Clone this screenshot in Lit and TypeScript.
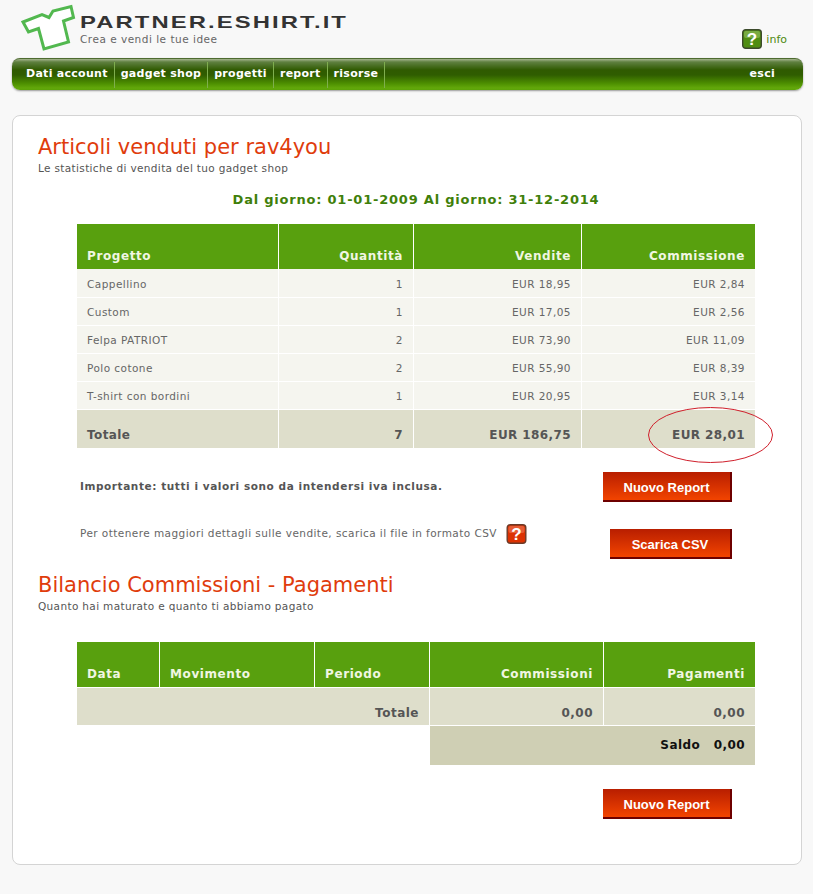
import { LitElement, html, css, svg } from "lit";
import { customElement } from "lit/decorators.js";

const FONT = css`"DejaVu Sans", Verdana, sans-serif`;

@customElement("app-root")
export class AppRoot extends LitElement {
  static styles = css`
    :host { display: block; width: 813px; height: 894px; overflow: hidden; background: #f8f8f8; font-family: ${FONT}; font-size: 11px; color: #555; position: relative; }
    * { box-sizing: border-box; }
    .top { height: 58px; display: flex; position: relative; }
    .shirt { width: 56px; height: 52px; margin: 3px 0 0 20px; flex: none; }
    .brand { margin: 13px 0 0 4px; }
    .brand b { display: block; font-family: "Liberation Sans", Arial, sans-serif; font-weight: 700; font-size: 17px; line-height: 20px; height: 20px; letter-spacing: 1.5px; color: #333; white-space: nowrap; transform-origin: 0 50%; transform: scaleX(1.4); }
    .brand span { display: block; font-size: 10.5px; line-height: 12px; margin-top: 0; color: #666; letter-spacing: 0.5px; }
    .info { display: flex; align-items: center; gap: 4px; margin: 29px 26px 0 auto; height: 20px; font-size: 11px; color: #4f8a10; }
    .qi { width: 20px; height: 20px; flex: none; display: block; }
    .nav { margin-left: 12px; width: 791px; height: 32px; border-radius: 8px; display: flex; align-items: stretch; padding: 3px 0 2px 8px; background: linear-gradient(#a6b58f 0, #5f8040 3px, #2f5a00 11px, #2f5d00 16px, #4b8c00 24px, #62a80a 29px, #58a008 32px); border-top: 1px solid #4e6b30; box-shadow: 0 1px 2px #999; color: #fff; font-weight: 700; font-size: 11px; letter-spacing: 0.28px; }
    .nav a { display: flex; align-items: center; padding: 0 6px; border-right: 1px solid #7fae4e; white-space: nowrap; height: 100%; padding-bottom: 4px; }
    .nav a.esci { margin-left: auto; border: 0; margin-right: 22px; }
    .panel { margin: 25px 0 0 12px; width: 790px; height: 750px; background: #fff; border: 1px solid #d4d4d4; border-radius: 8px; padding: 17px 0 0 25px; position: relative; }
    h1 { margin: 0; font-weight: 400; font-size: 21px; line-height: 28px; color: #e03c0c; white-space: nowrap; }
    .sub { font-size: 10.5px; line-height: 12px; margin-top: 1px; color: #555; letter-spacing: 0.35px; }
    .range { margin: 16px 0 0 0; width: 756px; text-align: center; font-size: 13px; font-weight: 700; line-height: 20px; color: #3f7f0a; letter-spacing: 0.78px; }
    table { border-collapse: separate; border-spacing: 0; table-layout: fixed; width: 678px; margin-left: 39px; }
    th { background: #58a00e; color: #f0f6e2; height: 45px; font-size: 12px; font-weight: 700; text-align: left; vertical-align: bottom; padding: 0 10px 5px; border-right: 1px solid #fff; line-height: 15px; letter-spacing: 0.6px; }
    td { height: 28px; background: #f5f5ef; border-right: 1px solid #fff; border-bottom: 1px solid #fff; padding: 0 10px; font-size: 10.5px; color: #666; letter-spacing: 0.45px; }
    tbody tr:first-child td { height: 29px; padding-top: 1px; }
    th:last-child, td:last-child { border-right: 0; }
    .r { text-align: right; }
    tbody tr.total td { height: 38px; background: #dedecb; font-size: 12px; font-weight: 700; color: #555; vertical-align: bottom; padding-bottom: 6px; letter-spacing: 0.4px; border-bottom: 0; }
    tbody tr.total2 td { background: #dedecb; font-size: 12px; color: #555; font-weight: 700; vertical-align: bottom; padding: 0 10px 5px; border-top: 1px solid #fff; height: 39px; letter-spacing: 0.5px; }
    tr.saldo td { height: 39px; font-size: 12px; font-weight: 700; color: #111; letter-spacing: 0.4px; }
    tr.saldo td.s { background: #cfcfb4; border: 0; padding-bottom: 2px; }
    tr.saldo td.e { background: #fff; border: 0; }
    .row { display: flex; align-items: flex-start; width: 652px; margin-left: 42px; }
    .imp { font-weight: 700; font-size: 10.5px; color: #555; letter-spacing: 0.57px; line-height: 13px; padding-top: 8px; white-space: nowrap; }
    .btn { margin-left: auto; height: 30px; flex: none; background: linear-gradient(#b81e00, #f24400); border-right: 2px solid #6e0000; border-bottom: 2px solid #6e0000; color: #fff; font-weight: 700; font-size: 13px; display: flex; align-items: center; justify-content: center; font-family: "Liberation Sans", Arial, sans-serif; padding-top: 2px; }
    .w129 { width: 129px; }
    .w122 { width: 122px; }
    .first { margin-top: 24px; }
    .second { margin-top: 27px; height: 31px; }
    .csv { font-size: 10.5px; line-height: 13px; letter-spacing: 0.44px; color: #666; margin-top: -2px; white-space: nowrap; }
    .qr { width: 21px; height: 20px; margin: -5px 0 0 9px; flex: none; }
    .bil { margin-top: 11px; }
    .t2 { margin-top: 30px; }
    .t1 { margin-top: 14px; }
    .last { margin-top: 24px; margin-left: 42px; width: 652px; display: flex; }
    .ellipse { position: absolute; left: 634px; top: 291px; width: 127px; height: 57px; pointer-events: none; }
  `;

  private q(base: string, light: string, border: string) {
    return svg`<rect x="0.7" y="0.7" width="18.6" height="18.6" rx="3" fill="${base}" stroke="${border}" stroke-width="1.4"/>
      <rect x="2" y="2" width="16" height="7" rx="2" fill="${light}" opacity=".55"/>
      <text x="10" y="16" text-anchor="middle" font-family="Liberation Sans, Arial, sans-serif" font-weight="700" font-size="17" fill="#fff">?</text>`;
  }

  render() {
    const rows: [string, string, string, string][] = [
      ["Cappellino", "1", "EUR 18,95", "EUR 2,84"],
      ["Custom", "1", "EUR 17,05", "EUR 2,56"],
      ["Felpa PATRIOT", "2", "EUR 73,90", "EUR 11,09"],
      ["Polo cotone", "2", "EUR 55,90", "EUR 8,39"],
      ["T-shirt con bordini", "1", "EUR 20,95", "EUR 3,14"],
    ];
    return html`
      <div class="top">
        <svg class="shirt" viewBox="0 0 56 52">
          <path d="M3 19 L22 11.5 L29 14.5 L33 8 L51 3.5 L53.5 14.5 L43.5 18 L48.5 39 L24 46 L18.5 25.5 L8.5 29 Z" fill="#fff" stroke="#52b84f" stroke-width="3" stroke-linejoin="miter"/>
        </svg>
        <div class="brand"><b>PARTNER.ESHIRT.IT</b><span>Crea e vendi le tue idee</span></div>
        <div class="info"><svg class="qi" viewBox="0 0 20 20">${this.q("#4f8d12", "#9cc46a", "#3c4a2c")}</svg>info</div>
      </div>
      <nav class="nav">
        <a>Dati account</a><a>gadget shop</a><a>progetti</a><a>report</a><a>risorse</a>
        <a class="esci">esci</a>
      </nav>
      <main class="panel">
        <h1>Articoli venduti per rav4you</h1>
        <div class="sub">Le statistiche di vendita del tuo gadget shop</div>
        <div class="range">Dal giorno: 01-01-2009 Al giorno: 31-12-2014</div>
        <table class="t1">
          <colgroup><col style="width:202px"/><col style="width:135px"/><col style="width:168px"/><col style="width:173px"/></colgroup>
          <thead><tr><th>Progetto</th><th class="r">Quantità</th><th class="r">Vendite</th><th class="r">Commissione</th></tr></thead>
          <tbody>
            ${rows.map((r) => html`<tr><td>${r[0]}</td><td class="r">${r[1]}</td><td class="r">${r[2]}</td><td class="r">${r[3]}</td></tr>`)}
            <tr class="total"><td>Totale</td><td class="r">7</td><td class="r">EUR 186,75</td><td class="r">EUR 28,01</td></tr>
          </tbody>
        </table>
        <div class="row first"><div class="imp">Importante: tutti i valori sono da intendersi iva inclusa.</div><div class="btn w129">Nuovo Report</div></div>
        <div class="row second"><div class="csv">Per ottenere maggiori dettagli sulle vendite, scarica il file in formato CSV</div>
          <svg class="qr" viewBox="0 0 20 20">${this.q("#dc3202", "#f08060", "#6b3a28")}</svg>
          <div class="btn w122">Scarica CSV</div></div>
        <h1 class="bil">Bilancio Commissioni - Pagamenti</h1>
        <div class="sub">Quanto hai maturato e quanto ti abbiamo pagato</div>
        <table class="t2">
          <colgroup><col style="width:83px"/><col style="width:155px"/><col style="width:115px"/><col style="width:174px"/><col style="width:151px"/></colgroup>
          <thead><tr><th>Data</th><th>Movimento</th><th>Periodo</th><th class="r">Commissioni</th><th class="r">Pagamenti</th></tr></thead>
          <tbody>
            <tr class="total2"><td colspan="3" class="r">Totale</td><td class="r">0,00</td><td class="r">0,00</td></tr>
            <tr class="saldo"><td colspan="3" class="e"></td><td colspan="2" class="r s">Saldo &nbsp; 0,00</td></tr>
          </tbody>
        </table>
        <div class="last"><div class="btn w129">Nuovo Report</div></div>
        <svg class="ellipse" viewBox="0 0 127 57"><ellipse cx="63.5" cy="28" rx="62" ry="27.5" fill="none" stroke="#d0202c" stroke-width="1"/></svg>
      </main>
    `;
  }
}
